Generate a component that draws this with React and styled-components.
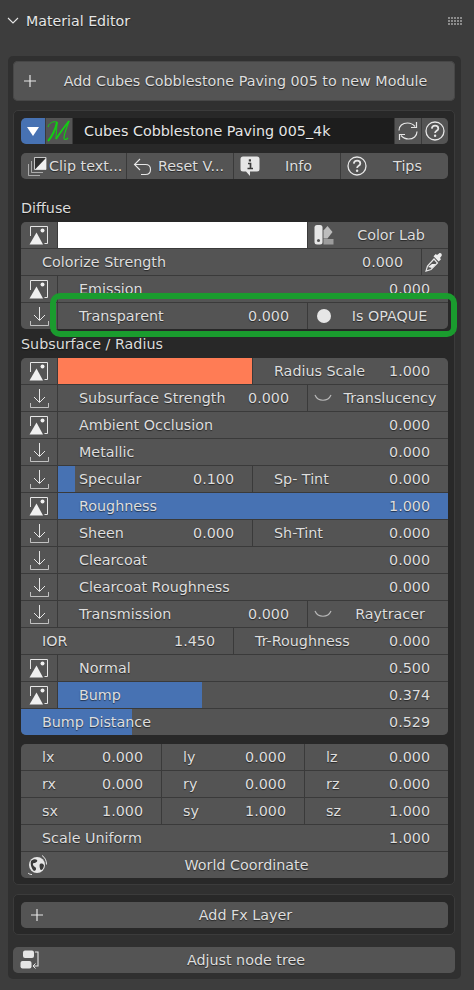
import React from 'react';
import styled, { createGlobalStyle, css } from 'styled-components';

const Global = createGlobalStyle`
  html, body { margin: 0; padding: 0; background: #3d3d3d; }
  body { width: 474px; height: 990px; overflow: hidden; font-family: "DejaVu Sans", sans-serif; }
`;

const raised = css`
  padding-bottom: 1px;
`;

const Page = styled.div`
  position: relative;
  width: 474px;
  height: 990px;
  background: #3d3d3d;
  color: #dedede;
  font-size: 14.3px;
  text-shadow: 0 1px 1px rgba(0, 0, 0, 0.55);
`;

const Header = styled.div`
  height: 56px;
  display: flex;
  align-items: flex-start;
  padding: 13px 11px 0 7px;
  box-sizing: border-box;
`;
const HeaderTitle = styled.div`
  flex: 1;
  margin-left: 7px;
  font-size: 14.2px;
  line-height: 17px;
  color: #e6e6e6;
`;
const Panel = styled.div`
  width: 453px;
  margin-left: 8px;
  box-sizing: border-box;
  padding: 5px 6px 6px 5px;
  background: #303030;
  border-radius: 5px;
`;
const BigButton = styled.div`
  height: 40px;
  border-radius: 5px;
  background: #545454;
  display: flex;
  align-items: center;
  padding: 0 9px 0 11px;
  box-shadow: inset 0 0 0 1px #474747;
`;
const BigLabel = styled.div`
  ${raised}
  flex: 1;
  text-align: center;
  white-space: nowrap;
  padding-left: 9px;
`;
const Box = styled.div`
  margin-top: ${p => p.$top || 9}px;
  border: 1px solid #3b3b3b;
  border-radius: 5px;
  background: #282828;
  padding: 7px 6px 6px 7px;
`;
const Group = styled.div`
  display: flex;
  flex-direction: column;
  gap: 1px;
  border-radius: 5px;
  overflow: hidden;
  background: #3a3a3a;
  margin-top: ${p => p.$top || 0}px;
`;
const Row = styled.div`
  display: flex;
  height: 26px;
  gap: 1px;
`;
const Cell = styled.div`
  position: relative;
  box-sizing: border-box;
  flex: ${p => (p.$w ? `0 0 ${p.$w}px` : '1 1 0')};
  min-width: 0;
  background: ${p => p.$bg || '#545454'};
  display: flex;
  align-items: center;
  justify-content: ${p => p.$center ? 'center' : 'flex-start'};
  padding-left: ${p => p.$pl || 0}px;
  padding-right: ${p => p.$pr || 0}px;
`;
const Fill = styled.div`
  position: absolute;
  left: 0; top: 0; bottom: 0;
  background: #4772b3;
`;
const Label = styled.span`
  ${raised}
  position: relative;
  flex: 1;
  white-space: nowrap;
`;
const Value = styled.span`
  ${raised}
  position: relative;
  white-space: nowrap;
`;
const Center = styled.span`
  ${raised}
  position: relative;
  flex: 1;
  text-align: center;
  white-space: nowrap;
  padding-right: ${p => p.$pr || 0}px;
`;
const SectionLabel = styled.div`
  height: 29px;
  line-height: 30px;
  margin-top: ${p => p.$top || 0}px;
  color: #dcdcdc;
`;
const NameField = styled.div`
  ${raised}
  box-sizing: border-box;
  height: 26px;
  flex: 1;
  background: #1d1d1d;
  color: #e6e6e6;
  display: flex;
  align-items: center;
  padding-left: 11px;
`;
const Highlight = styled.div`
  position: absolute;
  left: 50px;
  top: 293px;
  width: 407px;
  height: 44px;
  box-sizing: border-box;
  border: 6px solid #1a9c2e;
  border-radius: 10px;
  pointer-events: none;
`;
const Swatch = styled.div`
  flex: ${p => `0 0 ${p.$w}px`};
  background: ${p => p.$color};
`;
const Dot = styled.span`
  flex: 0 0 14px;
  height: 14px;
  border-radius: 50%;
  background: #e6e6e6;
`;
const IconSlot = styled.span`
  display: flex;
  flex: 0 0 auto;
  margin-right: ${p => p.$mr || 0}px;
  margin-top: ${p => p.$mt || 0}px;
`;

const Ico = ({ w = 20, h = 20, vb, children }) => (
  <svg width={w} height={h} viewBox={vb || `0 0 ${w} ${h}`} fill="none" stroke="#e6e6e6" strokeWidth="1" style={{ display: 'block', flex: 'none' }}>{children}</svg>
);

const ImageIcon = () => (
  <Ico>
    <path d="M1.5 11V1.5h17v17h-3" />
    <path d="M0.5 19.5 L7.5 7.5 L14 19.5 Z" fill="#f0f0f0" stroke="none" />
    <circle cx="13.5" cy="5.5" r="2" fill="#f0f0f0" stroke="none" />
  </Ico>
);
const ImportIcon = () => (
  <Ico>
    <path d="M10.5 1v13M5 9l5.5 5.5L16 9" />
    <path d="M1.5 15v4.500h18V15" strokeOpacity=".75" />
  </Ico>
);
const Plus = () => (
  <Ico w={12} h={12}><path d="M6 0v12M0 6h12" strokeWidth="1.200" /></Ico>
);
const Chevron = () => (
  <Ico w={12} h={8}><path d="M1 1l5 5 5-5" strokeWidth="1.100" /></Ico>
);
const Grip = () => (
  <svg width="15" height="8" style={{ display: 'block', marginTop: 4 }}>
    {[0, 3, 6].map(y => [0, 3, 6, 9, 12].map(x => <rect key={`${x}-${y}`} x={x} y={y} width="2" height="2" fill="#8c8c8c" />))}
  </svg>
);
const LogoMark = () => (
  <svg width="24" height="22" viewBox="0 0 24 22" fill="none" stroke="#12cf12" style={{ display: 'block' }}>
    <path d="M1 7C2 3 6 1 10 2" strokeWidth="1" />
    <path d="M1 21C5 17 9 8 10 2" strokeWidth="2" />
    <path d="M10 2C10 8 9 14 9 19" strokeWidth="1" />
    <path d="M9 19C13 13 18 6 22 1" strokeWidth="1.800" />
    <path d="M22 1C20 7 17 14 17 18c0 2 2 2 4 0" strokeWidth="1.200" />
  </svg>
);
const Refresh = () => (
  <Ico>
    <path d="M1 9.500C1 5 4.500 2 9.500 2c3 0 5.500 1.200 7.500 3.500M19 10.500c0 4.500-3.500 7.500-8.500 7.500-3 0-5.500-1.200-7.500-3.500" strokeWidth="1.200" />
    <path d="M18.500 1v5.500H13M1.500 19v-5.500H7" strokeWidth="1.200" />
  </Ico>
);
const Help = () => (
  <Ico>
    <circle cx="10" cy="10" r="9" strokeWidth="1.300" />
    <path d="M6.800 7.600c.2-1.900 1.500-3 3.300-3 1.900 0 3.200 1.200 3.200 2.800 0 2.500-3.200 2.300-3.200 4.700" strokeWidth="1.800" />
    <circle cx="10.100" cy="14.800" r="1.200" fill="#e6e6e6" stroke="none" />
  </Ico>
);
const ClipIcon = () => (
  <Ico>
    <path d="M7.500 1.500h11.500v12H7.500z" fill="#2e2e2e" strokeOpacity=".8" />
    <path d="M8 13.500L19 2v11.500z" fill="#f0f0f0" stroke="none" />
    <path d="M4.500 5v11.500H16M1.500 8v11.500H13" strokeOpacity=".6" />
  </Ico>
);
const ResetIcon = () => (
  <Ico>
    <path d="M7 3L1.500 8.500 7 14" strokeWidth="1.100" />
    <path d="M1.500 8.500h11c3 0 5 2 5 5s-2 5-5 5H8" strokeWidth="1.100" />
  </Ico>
);
const InfoIcon = () => (
  <Ico>
    <path d="M3 0.500h14a2.500 2.500 0 012.500 2.500v10a2.500 2.500 0 01-2.500 2.500h-7V20l-4-4.500H3A2.500 2.500 0 01.500 13V3A2.500 2.500 0 013 .5z" fill="#e6e6e6" stroke="none" />
    <path d="M8 7.500h2.500v5M7.500 12.500h5.500" stroke="#3a3a3a" strokeWidth="1.700" />
    <rect x="8.800" y="3.300" width="2.200" height="2.200" fill="#3a3a3a" stroke="none" />
  </Ico>
);
const ColorLabIcon = () => (
  <Ico>
    <rect x="0.500" y="0" width="8" height="19.500" rx="2.500" fill="#e6e6e6" stroke="none" />
    <circle cx="4.500" cy="15.500" r="1.500" fill="#545454" stroke="none" />
    <path d="M9.500 5.500L13.500 1l5 6-5 6.500H9.500z" fill="#bdbdbd" stroke="none" />
    <path d="M9.500 14h10v5.500h-10z" fill="#9c9c9c" stroke="none" />
  </Ico>
);
const Eyedropper = () => (
  <Ico>
    <path d="M14 1.500c1.500-1.300 3.600.7 2.500 2.500L15 6l1 1.200-2.300 2.200-5.200-5.200L10.800 2 12 3z" fill="#ededed" stroke="none" />
    <path d="M9 7L2.500 14 1 19l5-1.500L12.500 11z" strokeWidth="1.200" />
    <path d="M3 15l4 1 4-4-4 0z" fill="#ededed" stroke="none" />
  </Ico>
);
const Curve = () => (
  <Ico w={18} h={8}><path d="M1 1c3 7 13 7 16 0" stroke="#b8b8b8" strokeWidth="1.200" /></Ico>
);
const Globe = () => (
  <Ico>
    <circle cx="10" cy="10" r="8" fill="#e6e6e6" stroke="none" />
    <path d="M4 6c2-2 5-2 6-1s-1 3-3 3-1 3 1 4 1 4-1 4c-2-2-4-6-3-10zM13 9c2-1 3 0 4 1 0 3-2 5-3 5s-2-5-1-6z" fill="#3b3b3b" stroke="none" />
    <path d="M15 .5c3 2 4.500 5 4.500 9M5 19.500c-1.500 0-3-.5-4-1.500" />
  </Ico>
);
const NodeTree = () => (
  <Ico>
    <rect x="3" y="0.500" width="11" height="7.500" rx="2" fill="#e6e6e6" stroke="none" />
    <rect x="0.500" y="11" width="11" height="7.500" rx="2" fill="#e6e6e6" stroke="none" />
    <path d="M15 2h3v14h-4" strokeWidth="1.100" />
    <path d="M15.500 13.500l-2.500 2.500 2.500 2.500" />
  </Ico>
);

const Cap = ({ children, ...p }) => <Cell $w={36} $center {...p}>{children}</Cell>;
const Slider = ({ label, value, fill = 0, ...p }) => (
  <Cell $pl={21} $pr={18} {...p}>
    {fill > 0 && <Fill style={{ width: fill }} />}
    <Label>{label}</Label>
    <Value>{value}</Value>
  </Cell>
);
const IconButton = ({ icon, label, w, pl = 6, pr = 0 }) => (
  <Cell $w={w} $pl={pl} $pr={pr}>
    <IconSlot>{icon}</IconSlot>
    <Center>{label}</Center>
  </Cell>
);
const ImgCap = () => <Cap><ImageIcon /></Cap>;
const ImpCap = () => <Cap><ImportIcon /></Cap>;

export default function App() {
  return (
    <Page>
      <Global />
      <Header>
        <IconSlot $mt={4}><Chevron /></IconSlot>
        <HeaderTitle>Material Editor</HeaderTitle>
        <Grip />
      </Header>
      <Panel>
        <BigButton>
          <Plus />
          <BigLabel>Add Cubes Cobblestone Paving 005 to new Module</BigLabel>
        </BigButton>
        <Box>
          <Group>
            <Row>
              <Cell $w={24} $bg="#4772b3" $center>
                <svg width="12" height="9" style={{ display: 'block' }}><path d="M0 0h12L6 9z" fill="#fff" /></svg>
              </Cell>
              <Cell $w={26} $center><LogoMark /></Cell>
              <NameField>Cubes Cobblestone Paving 005_4k</NameField>
              <Cell $w={26} $center><Refresh /></Cell>
              <Cell $w={26} $center><Help /></Cell>
            </Row>
          </Group>
          <Group $top={9}>
            <Row>
              <Cell $w={105} $pl={6}><IconSlot $mr={2}><ClipIcon /></IconSlot><Label>Clip text...</Label></Cell>
              <Cell $w={106} $pl={6}><IconSlot $mr={5}><ResetIcon /></IconSlot><Label>Reset V...</Label></Cell>
              <IconButton w={106} icon={<InfoIcon />} label="Info" pr={3} />
              <IconButton icon={<Help />} label="Tips" />
            </Row>
          </Group>
          <SectionLabel $top={14}>Diffuse</SectionLabel>
          <Group>
            <Row>
              <ImgCap />
              <Swatch $w={249} $color="#ffffff" />
              <IconButton icon={<ColorLabIcon />} label="Color Lab" />
            </Row>
            <Row>
              <Slider label="Colorize Strength" value="0.000" />
              <Cell $w={26} $center><Eyedropper /></Cell>
            </Row>
            <Row>
              <ImgCap />
              <Slider label="Emission" value="0.000" />
            </Row>
            <Row>
              <ImpCap />
              <Slider label="Transparent" value="0.000" $w={249} />
              <Cell $pl={9}><Dot /><Center>Is OPAQUE</Center></Cell>
            </Row>
          </Group>
          <SectionLabel>Subsurface / Radius</SectionLabel>
          <Group>
            <Row>
              <ImgCap />
              <Swatch $w={194} $color="#ff7c55" />
              <Slider label="Radius Scale" value="1.000" />
            </Row>
            <Row>
              <ImpCap />
              <Slider label="Subsurface Strength" value="0.000" $w={249} />
              <Cell $pl={6}><IconSlot><Curve /></IconSlot><Center>Translucency</Center></Cell>
            </Row>
            <Row><ImgCap /><Slider label="Ambient Occlusion" value="0.000" /></Row>
            <Row><ImpCap /><Slider label="Metallic" value="0.000" /></Row>
            <Row>
              <ImpCap />
              <Slider label="Specular" value="0.100" fill={17} $w={194} />
              <Slider label="Sp- Tint" value="0.000" />
            </Row>
            <Row><ImgCap /><Slider label="Roughness" value="1.000" $bg="#4772b3" /></Row>
            <Row>
              <ImpCap />
              <Slider label="Sheen" value="0.000" $w={194} />
              <Slider label="Sh-Tint" value="0.000" />
            </Row>
            <Row><ImpCap /><Slider label="Clearcoat" value="0.000" /></Row>
            <Row><ImpCap /><Slider label="Clearcoat Roughness" value="0.000" /></Row>
            <Row>
              <ImpCap />
              <Slider label="Transmission" value="0.000" $w={249} />
              <Cell $pl={6}><IconSlot><Curve /></IconSlot><Center>Raytracer</Center></Cell>
            </Row>
            <Row>
              <Slider label="IOR" value="1.450" $w={212} />
              <Slider label="Tr-Roughness" value="0.000" />
            </Row>
            <Row><ImgCap /><Slider label="Normal" value="0.500" /></Row>
            <Row><ImgCap /><Slider label="Bump" value="0.374" fill={144} /></Row>
            <Row><Slider label="Bump Distance" value="0.529" fill={111} /></Row>
          </Group>
          <Group $top={9}>
            {[['lx', 'ly', 'lz', '0.000'], ['rx', 'ry', 'rz', '0.000'], ['sx', 'sy', 'sz', '1.000']].map(([a, b, c, v]) => (
              <Row key={a}>
                <Slider label={a} value={v} $w={140} />
                <Slider label={b} value={v} $w={142} />
                <Slider label={c} value={v} />
              </Row>
            ))}
            <Row><Slider label="Scale Uniform" value="1.000" /></Row>
            <Row>
              <Cell $pl={6}><IconSlot><Globe /></IconSlot><Center $pr={2}>World Coordinate</Center></Cell>
            </Row>
          </Group>
        </Box>
        <Box>
          <Group>
            <Row>
              <Cell $pl={10}><IconSlot><Plus /></IconSlot><Center>Add Fx Layer</Center></Cell>
            </Row>
          </Group>
        </Box>
        <Group $top={12}>
          <Row>
            <Cell $pl={7}><IconSlot><NodeTree /></IconSlot><Center $pr={3}>Adjust node tree</Center></Cell>
          </Row>
        </Group>
      </Panel>
      <Highlight />
    </Page>
  );
}
